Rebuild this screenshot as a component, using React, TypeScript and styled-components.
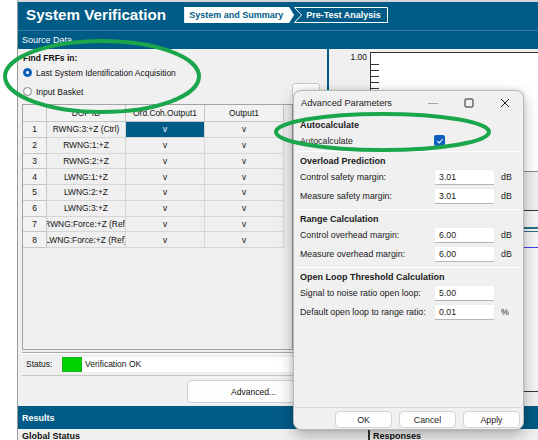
import React from "react";
import styled, { createGlobalStyle } from "styled-components";

const BLUE = "#005b86";
const GREEN = "#1aa64a";

const Global = createGlobalStyle`
  html, body { margin: 0; padding: 0; background: #fff; }
  body { font-family: "Liberation Sans", Arial, sans-serif; color: #111; }
  * { box-sizing: border-box; }
`;

const Page = styled.div`
  position: relative;
  width: 538px;
  height: 440px;
  overflow: hidden;
  display: flex;
  background: #fff;
`;

const Gutter = styled.div`
  width: 18px;
  flex-shrink: 0;
  background: #fff;
  border-right: 1px solid #9a9a9a;
`;

const AppFrame = styled.div`
  flex: 1;
  min-width: 0;
  display: flex;
  flex-direction: column;
  background: #f0f0f0;
`;

const TopStrip = styled.div`
  height: 2px;
  background: #d6d6d6;
`;

const Header = styled.header`
  height: 28px;
  background: ${BLUE};
  display: flex;
  align-items: center;
  padding-left: 8px;
`;

const Title = styled.h1`
  margin: -2px 0 0 0;
  font-size: 15.2px;
  line-height: 1;
  font-weight: bold;
  color: #fff;
  white-space: nowrap;
`;

const Crumbs = styled.nav`
  display: flex;
  align-self: flex-start;
  margin: 5px 0 0 18px;
  height: 16px;
`;

const ActiveCrumb = styled.div`
  width: 110px;
  height: 16px;
  background: #fff;
  color: ${BLUE};
  font-size: 9px;
  font-weight: bold;
  display: flex;
  align-items: center;
  padding-left: 5px;
  white-space: nowrap;
  clip-path: polygon(0 0, calc(100% - 5px) 0, 100% 50%, calc(100% - 5px) 100%, 0 100%);
`;

const NextCrumb = styled.div`
  position: relative;
  width: 99px;
  height: 16px;
  margin-left: -5px;
  color: #fff;
  font-size: 9px;
  font-weight: bold;
  display: flex;
  align-items: center;
  padding-left: 17px;
  white-space: nowrap;
`;

const CrumbOutline = styled.svg`
  position: absolute;
  inset: 0;
  width: 100%;
  height: 100%;
`;

const SectionBar = styled.div<{ $height: number }>`
  height: ${(p) => p.$height}px;
  background: ${BLUE};
  border-top: 1px solid #3a7fa3;
  color: #fff;
  font-size: 9px;
  display: flex;
  align-items: center;
  padding-left: 4px;
`;

const ResultsBar = styled(SectionBar)`
  border-top: none;
  font-weight: bold;
`;

const Body = styled.div`
  height: 357px;
  display: flex;
`;

const LeftPanel = styled.section`
  width: 309px;
  flex-shrink: 0;
  display: flex;
  flex-direction: column;
  padding: 4px 7px 0 4px;
  font-size: 8.5px;
`;

const FindLabel = styled.div`
  height: 10px;
  line-height: 10px;
  padding-left: 1px;
  font-weight: bold;
`;

const RadioRow = styled.label`
  height: 19px;
  display: flex;
  align-items: center;
  padding-left: 1px;
  white-space: nowrap;
`;

const RadioDot = styled.span<{ $on?: boolean }>`
  width: 9px;
  height: 9px;
  border-radius: 50%;
  flex-shrink: 0;
  margin-right: 4px;
  background: ${(p) => (p.$on ? "#0a5fb4" : "#f7f7f7")};
  border: 1px solid ${(p) => (p.$on ? "#0a5fb4" : "#858585")};
  display: flex;
  align-items: center;
  justify-content: center;
  &::after {
    content: "";
    display: ${(p) => (p.$on ? "block" : "none")};
    width: 3px;
    height: 3px;
    border-radius: 50%;
    background: #fff;
  }
`;

const SmallButton = styled.div`
  margin-left: auto;
  align-self: flex-start;
  margin-top: 1px;
  width: 28px;
  height: 16px;
  background: #fdfdfd;
  border: 1px solid #c9c9c9;
  border-radius: 3px;
`;

const TableFrame = styled.div`
  margin-top: 3px;
  width: 271px;
  height: 246px;
  border: 1px solid #a3a3a3;
  background: #f0f0f0;
  display: grid;
  grid-template-columns: 24px 79px 79px 79px 1fr;
  grid-template-rows: 17px repeat(8, 15.75px);
  align-content: start;
`;

type CellKind = "head" | "rowhead" | "data" | "selected" | "fill";

const Cell = styled.div<{ $kind: CellKind }>`
  display: flex;
  align-items: center;
  justify-content: center;
  overflow: hidden;
  white-space: nowrap;
  font-size: 8.4px;
  border-right: 1px solid ${(p) => (p.$kind === "fill" ? "transparent" : p.$kind === "head" || p.$kind === "rowhead" ? "#c6c6c6" : "#d6d6d6")};
  border-bottom: 1px solid ${(p) => (p.$kind === "fill" ? "transparent" : p.$kind === "head" || p.$kind === "rowhead" ? "#c6c6c6" : "#d6d6d6")};
  background: ${(p) =>
    p.$kind === "selected" ? BLUE : p.$kind === "head" || p.$kind === "rowhead" ? "#f2f2f2" : p.$kind === "fill" ? "#ececec" : "#efefef"};
  color: ${(p) => (p.$kind === "selected" ? "#fff" : "#111")};
  & > span { flex-shrink: 0; }
`;

const StatusRow = styled.div`
  width: 271px;
  margin-top: 2px;
  height: 24px;
  border-top: 1px solid #a8a8a8;
  border-bottom: 1px solid #c4c4c4;
  box-shadow: inset 0 1px 0 #fff;
  display: flex;
  align-items: center;
`;

const StatusLabel = styled.span`
  width: 40px;
  padding-left: 4px;
`;

const StatusField = styled.div`
  flex: 1;
  height: 15px;
  background: #fff;
  display: flex;
  align-items: center;
`;

const GreenLamp = styled.span`
  width: 20px;
  height: 15px;
  background: #00d400;
  border: 1px solid #19b019;
  margin-right: 3px;
`;

const AdvancedButton = styled.div`
  margin: 4px 0 0 165px;
  width: 133px;
  height: 23px;
  flex-shrink: 0;
  background: #fdfdfd;
  border: 1px solid #cfcfcf;
  border-radius: 4px;
  display: flex;
  align-items: center;
  justify-content: center;
`;

const Divider = styled.div`
  width: 2px;
  background: ${BLUE};
  flex-shrink: 0;
`;

const RightPanel = styled.section`
  flex: 1;
  min-width: 0;
  padding-top: 3px;
  display: flex;
  flex-direction: column;
  font-size: 8.5px;
`;

const PlotRow = styled.div`
  display: flex;
  height: 120px;
`;

const AxisLabel = styled.div`
  width: 41px;
  padding-right: 3px;
  text-align: right;
  line-height: 10px;
`;

const PlotBox = styled.div`
  flex: 1;
  background: #fff;
  border-top: 1px solid #333;
  border-left: 1px solid #333;
  border-bottom: 1px solid #8a8a8a;
  display: flex;
`;

const LowerPlot = styled.div`
  margin: 38px 0 0 41px;
  height: 182px;
  background: #f5f5f5;
  border-top: 1px solid #333;
  border-bottom: 1px solid #333;
  display: flex;
`;

const BottomRow = styled.div`
  flex: 1;
  display: flex;
  font-size: 9px;
  font-weight: bold;
  overflow: hidden;
`;

const BottomLeft = styled.div`
  width: 350px;
  padding: 2px 0 0 4px;
`;

const BottomRight = styled.div`
  flex: 1;
  border-left: 2px solid #333;
  padding: 2px 0 0 3px;
`;

/* ---------- dialog ---------- */

const Dialog = styled.div`
  position: absolute;
  left: 293px;
  top: 90px;
  width: 231px;
  height: 340px;
  background: #f0f0f0;
  border: 1px solid #b8b8b8;
  border-radius: 8px;
  box-shadow: 0 6px 16px rgba(0, 0, 0, 0.26), 0 0 5px rgba(0, 0, 0, 0.12);
  display: flex;
  flex-direction: column;
  overflow: hidden;
  font-size: 8.8px;
  color: #1a1a1a;
`;

const TitleBar = styled.div`
  height: 23px;
  display: flex;
  align-items: center;
  padding-left: 7px;
  font-size: 9.2px;
`;

const TitleText = styled.span`
  flex: 1;
`;

const WinButton = styled.div`
  width: 36px;
  height: 23px;
  display: flex;
  align-items: center;
  justify-content: center;
`;

const Section = styled.div<{ $first?: boolean }>`
  padding: ${(p) => (p.$first ? "4px 0 2px" : "1.5px 0 3.5px")};
`;

const Separator = styled.div<{ $strong?: boolean }>`
  height: 1px;
  margin: 0 4px 0 3px;
  background: ${(p) => (p.$strong ? "#dcdcdc" : "#ffffff")};
`;

const GroupTitle = styled.div`
  height: 14px;
  display: flex;
  align-items: center;
  padding-left: 6px;
  font-weight: bold;
  font-size: 9px;
`;

const FieldRow = styled.div<{ $h?: number }>`
  height: ${(p) => p.$h ?? 19}px;
  display: flex;
  align-items: center;
  padding-left: 6px;
`;

const FieldLabel = styled.span`
  width: 134px;
  white-space: nowrap;
`;

const ValueBox = styled.div`
  width: 61px;
  height: 16px;
  background: #fff;
  border: 1px solid #ececec;
  border-bottom-color: #b5b5b5;
  border-radius: 2px;
  display: flex;
  align-items: center;
  padding-left: 4px;
`;

const Unit = styled.span`
  margin-left: 6px;
`;

const CheckBox = styled.span`
  width: 11px;
  height: 11px;
  border-radius: 2px;
  background: #0f5fc2;
  display: flex;
  align-items: center;
  justify-content: center;
`;

const Spacer = styled.div`
  flex: 1;
`;

const Footer = styled.div`
  height: 22px;
  border-top: 1px solid #d9d9d9;
  margin: 0 2px 0 1px;
  display: flex;
  justify-content: flex-end;
  gap: 7px;
  padding: 3px 1px 1px 0;
`;

const DlgButton = styled.div`
  width: 57px;
  height: 17px;
  background: #fdfdfd;
  border: 1px solid #d3d3d3;
  border-radius: 4px;
  display: flex;
  align-items: center;
  justify-content: center;
  font-size: 8.8px;
`;

const Highlight = styled.svg`
  position: absolute;
  left: 0;
  top: 0;
  pointer-events: none;
`;

const dofs = [
  "RWNG:3:+Z (Ctrl)",
  "RWNG:1:+Z",
  "RWNG:2:+Z",
  "LWNG:1:+Z",
  "LWNG:2:+Z",
  "LWNG:3:+Z",
  "RWNG:Force:+Z (Ref)",
  "LWNG:Force:+Z (Ref)",
];

type Field = { label: string; value: string; unit?: string };
const groups: { title: string; fields: Field[] }[] = [
  {
    title: "Overload Prediction",
    fields: [
      { label: "Control safety margin:", value: "3.01", unit: "dB" },
      { label: "Measure safety margin:", value: "3.01", unit: "dB" },
    ],
  },
  {
    title: "Range Calculation",
    fields: [
      { label: "Control overhead margin:", value: "6.00", unit: "dB" },
      { label: "Measure overhead margin:", value: "6.00", unit: "dB" },
    ],
  },
  {
    title: "Open Loop Threshold Calculation",
    fields: [
      { label: "Signal to noise ratio open loop:", value: "5.00" },
      { label: "Default open loop to range ratio:", value: "0.01", unit: "%" },
    ],
  },
];

const ticks = Array.from({ length: 20 }, (_, i) => 11 + i * 6);

export default function App() {
  return (
    <>
      <Global />
      <Page>
        <Gutter />
        <AppFrame>
          <TopStrip />
          <Header>
            <Title>System Verification</Title>
            <Crumbs>
              <ActiveCrumb>System and Summary</ActiveCrumb>
              <NextCrumb>
                <CrumbOutline viewBox="0 0 99 16" preserveAspectRatio="none">
                  <path d="M5.5 0.5 L12.5 8 L5.5 15.5 H98.5 V0.5 Z" fill="none" stroke="#fff" strokeWidth="1" />
                </CrumbOutline>
                Pre-Test Analysis
              </NextCrumb>
            </Crumbs>
          </Header>
          <SectionBar $height={19}>Source Data</SectionBar>
          <Body>
            <LeftPanel>
              <FindLabel>Find FRFs in:</FindLabel>
              <RadioRow>
                <RadioDot $on />
                Last System Identification Acquisition
              </RadioRow>
              <RadioRow>
                <RadioDot />
                Input Basket
                <SmallButton />
              </RadioRow>
              <TableFrame>
                <Cell $kind="head" />
                <Cell $kind="head">DOF ID</Cell>
                <Cell $kind="head">Ord.Coh.Output1</Cell>
                <Cell $kind="head">Output1</Cell>
                <Cell $kind="fill" />
                {dofs.map((d, i) => (
                  <React.Fragment key={d}>
                    <Cell $kind="rowhead">{i + 1}</Cell>
                    <Cell $kind="data">
                      <span>{d}</span>
                    </Cell>
                    <Cell $kind={i === 0 ? "selected" : "data"}>v</Cell>
                    <Cell $kind="data">v</Cell>
                    <Cell $kind="fill" />
                  </React.Fragment>
                ))}
              </TableFrame>
              <StatusRow>
                <StatusLabel>Status:</StatusLabel>
                <StatusField>
                  <GreenLamp />
                  Verification OK
                </StatusField>
              </StatusRow>
              <AdvancedButton>Advanced...</AdvancedButton>
            </LeftPanel>
            <Divider />
            <RightPanel>
              <PlotRow>
                <AxisLabel>1.00</AxisLabel>
                <PlotBox>
                  <svg width="100%" height="100%">
                    {ticks.map((y) => (
                      <line key={y} x1="0" y1={y + 0.5} x2="8" y2={y + 0.5} stroke="#333" strokeWidth="1" />
                    ))}
                  </svg>
                </PlotBox>
              </PlotRow>
              <LowerPlot>
                <svg width="100%" height="100%">
                  <line x1="0" y1="17" x2="200" y2="17" stroke="#2b6f88" strokeWidth="2" />
                  <line x1="0" y1="20.5" x2="200" y2="20.5" stroke="#2b6f88" strokeWidth="1" />
                  <line x1="0" y1="36.5" x2="200" y2="36.5" stroke="#3b45e6" strokeWidth="1" />
                  <line x1="180" y1="176" x2="180" y2="181" stroke="#333" strokeWidth="1" />
                </svg>
              </LowerPlot>
            </RightPanel>
          </Body>
          <ResultsBar $height={23}>Results</ResultsBar>
          <BottomRow>
            <BottomLeft>Global Status</BottomLeft>
            <BottomRight>Responses</BottomRight>
          </BottomRow>
        </AppFrame>

        <Dialog>
          <TitleBar>
            <TitleText>Advanced Parameters</TitleText>
            <WinButton>
              <svg width="10" height="10" viewBox="0 0 10 10">
                <line x1="0" y1="5.5" x2="10" y2="5.5" stroke="#a6a6a6" strokeWidth="1" />
              </svg>
            </WinButton>
            <WinButton>
              <svg width="10" height="10" viewBox="0 0 10 10">
                <rect x="1" y="1" width="8" height="8" rx="1" fill="none" stroke="#222" strokeWidth="1" />
              </svg>
            </WinButton>
            <WinButton>
              <svg width="10" height="10" viewBox="0 0 10 10">
                <path d="M1 1 L9 9 M9 1 L1 9" stroke="#222" strokeWidth="1" fill="none" />
              </svg>
            </WinButton>
          </TitleBar>
          <Section $first>
            <GroupTitle>Autocalculate</GroupTitle>
            <FieldRow $h={17}>
              <FieldLabel>Autocalculate</FieldLabel>
              <CheckBox>
                <svg width="8" height="8" viewBox="0 0 8 8">
                  <path d="M1.3 4.2 L3.2 6 L6.8 2" fill="none" stroke="#fff" strokeWidth="1.1" />
                </svg>
              </CheckBox>
            </FieldRow>
          </Section>
          {groups.map((g) => (
            <React.Fragment key={g.title}>
              <Separator />
              <Section>
                <GroupTitle>{g.title}</GroupTitle>
                {g.fields.map((f) => (
                  <FieldRow key={f.label}>
                    <FieldLabel>{f.label}</FieldLabel>
                    <ValueBox>{f.value}</ValueBox>
                    {f.unit && <Unit>{f.unit}</Unit>}
                  </FieldRow>
                ))}
              </Section>
            </React.Fragment>
          ))}
          <Spacer />
          <Footer>
            <DlgButton>OK</DlgButton>
            <DlgButton>Cancel</DlgButton>
            <DlgButton>Apply</DlgButton>
          </Footer>
        </Dialog>

        <Highlight width="538" height="440" viewBox="0 0 538 440">
          <ellipse cx="102" cy="76.5" rx="97" ry="35.5" fill="none" stroke={GREEN} strokeWidth="4" />
          <ellipse cx="382.5" cy="132" rx="106.5" ry="18" fill="none" stroke={GREEN} strokeWidth="4" />
        </Highlight>
      </Page>
    </>
  );
}
